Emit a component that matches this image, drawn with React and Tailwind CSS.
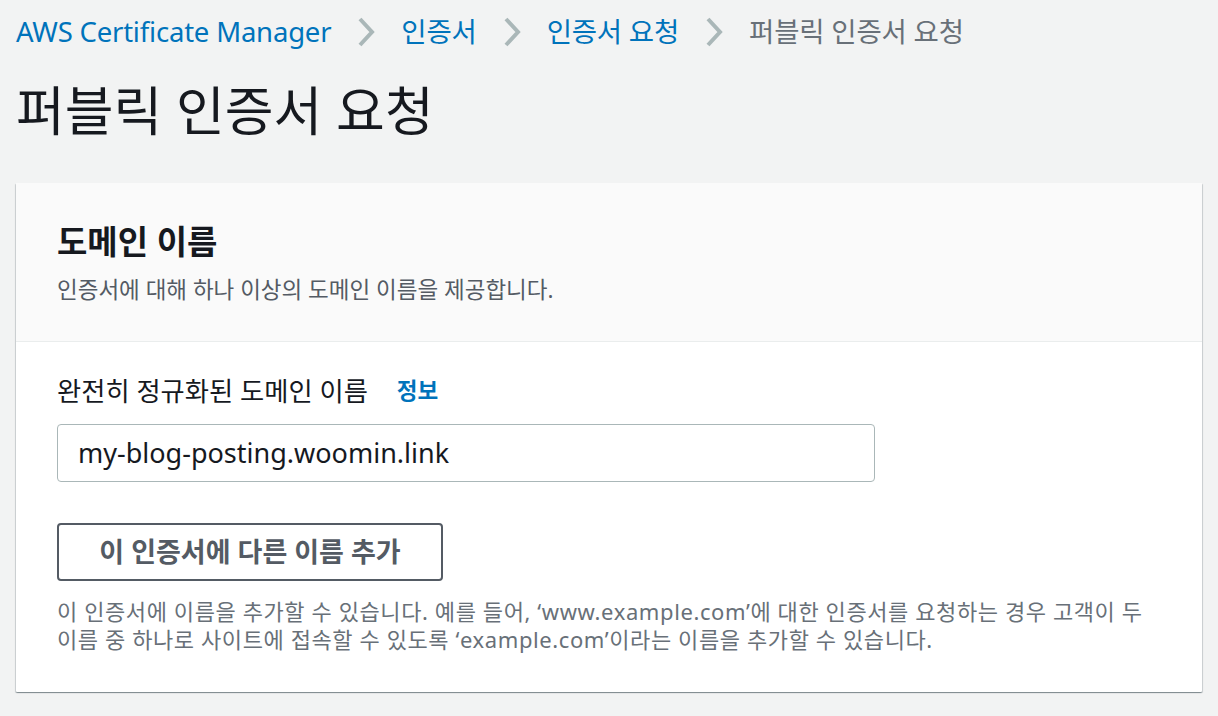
import React from 'react';

const font = { fontFamily: '"Noto Sans", "Noto Sans CJK KR", sans-serif' };

function Chevron() {
  return (
    <svg width="18" height="30" viewBox="0 0 18 30" className="mx-[26px]">
      <path d="M3 2 L15 15 L3 28" fill="none" stroke="#aab7b8" strokeWidth="4" />
    </svg>
  );
}

export default function App() {
  return (
    <div className="min-h-[716px] bg-[#f2f3f3] px-[16px] pt-[14px]" style={font}>
      {/* breadcrumb */}
      <nav className="flex items-center h-[36px] text-[27.5px] tracking-[-0.2px]">
        <span className="text-[#0073bb]">AWS Certificate Manager</span>
        <Chevron />
        <span className="text-[#0073bb]">인증서</span>
        <Chevron />
        <span className="text-[#0073bb]">인증서 요청</span>
        <Chevron />
        <span className="text-[#687078]">퍼블릭 인증서 요청</span>
      </nav>

      <h1 className="mt-[29px] text-[53px] leading-[64px] text-[#16191f]">퍼블릭 인증서 요청</h1>

      <div className="mt-[40px] w-[1186px] bg-white rounded-[1px] shadow-[0_1px_1px_0_rgba(0,28,36,0.3),1px_1px_1px_0_rgba(0,28,36,0.15),-1px_1px_1px_0_rgba(0,28,36,0.15)]">
        <div className="bg-[#fafafa] border-b border-[#eaeded] px-[41px] pt-[37px] pb-[36px]">
          <h2 className="text-[33px] leading-[44px] font-bold text-[#16191f]">도메인 이름</h2>
          <p className="mt-[11px] text-[22.5px] leading-[30px] text-[#545b64]">
            인증서에 대해 하나 이상의 도메인 이름을 제공합니다.
          </p>
        </div>

        <div className="px-[41px] pt-[32px] pb-[39px]">
          <div className="flex items-center text-[26.3px] leading-[34px] text-[#16191f]">
            <span>완전히 정규화된 도메인 이름</span>
            <span className="ml-[29px] font-bold text-[#0073bb] text-[22.5px]">정보</span>
          </div>

          <div className="mt-[16px] w-[818px] h-[58px] border border-[#aab7b8] rounded-[4px] bg-white flex items-center px-[20px] text-[27px] text-[#16191f]">
            my-blog-posting.woomin.link
          </div>

          <button className="mt-[41px] w-[386px] h-[58px] border-2 border-[#545b64] rounded-[4px] bg-white text-[27px] font-bold text-[#545b64] flex items-center justify-center">
            이 인증서에 다른 이름 추가
          </button>

          <div className="mt-[16px] text-[22px] leading-[28px] tracking-[0.6px] text-[#687078] whitespace-nowrap">
            <p>이 인증서에 이름을 추가할 수 있습니다. 예를 들어, ‘www.example.com’에 대한 인증서를 요청하는 경우 고객이 두</p>
            <p>이름 중 하나로 사이트에 접속할 수 있도록 ‘example.com’이라는 이름을 추가할 수 있습니다.</p>
          </div>
        </div>
      </div>
    </div>
  );
}
